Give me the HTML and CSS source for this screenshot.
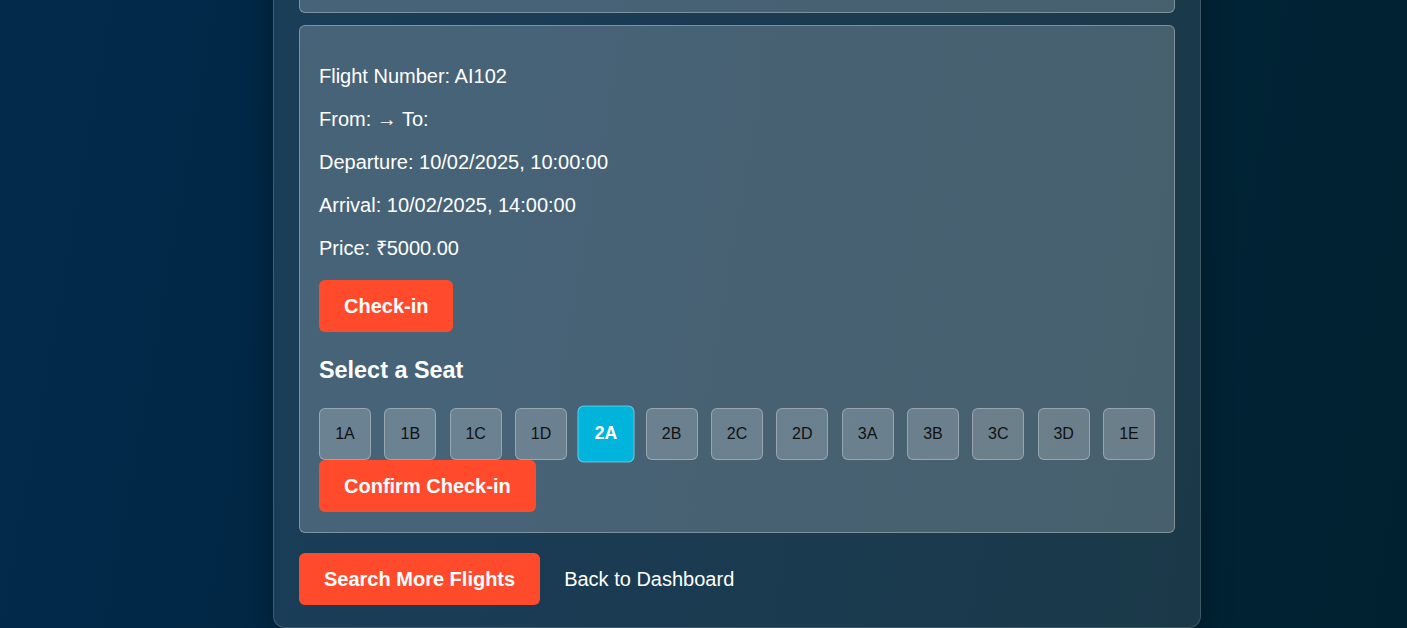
FILE: index.html
```html
<!DOCTYPE html>
<html lang="en">
<head>
<meta charset="utf-8">
<title>Flight Check-in</title>
<link rel="stylesheet" href="styles.css">
</head>
<body>
<main class="panel">
  <section class="card card-prev"></section>
  <section class="card">
    <div class="info">
      <p>Flight Number: AI102</p>
      <p>From: → To:</p>
      <p>Departure: 10/02/2025, 10:00:00</p>
      <p>Arrival: 10/02/2025, 14:00:00</p>
      <p>Price: ₹5000.00</p>
    </div>
    <button class="btn btn-checkin">Check-in</button>
    <h3 class="seat-title">Select a Seat</h3>
    <div class="seats">
      <button class="seat">1A</button>
      <button class="seat">1B</button>
      <button class="seat">1C</button>
      <button class="seat">1D</button>
      <button class="seat selected">2A</button>
      <button class="seat">2B</button>
      <button class="seat">2C</button>
      <button class="seat">2D</button>
      <button class="seat">3A</button>
      <button class="seat">3B</button>
      <button class="seat">3C</button>
      <button class="seat">3D</button>
      <button class="seat">1E</button>
    </div>
    <button class="btn btn-confirm">Confirm Check-in</button>
  </section>
  <div class="actions">
    <button class="btn">Search More Flights</button>
    <a class="link" href="#">Back to Dashboard</a>
  </div>
</main>
</body>
</html>
```

FILE: styles.css
```css
* { box-sizing: border-box; }

html, body {
  margin: 0;
  height: 628px;
  overflow: hidden;
}

body {
  font-family: "Liberation Sans", Arial, sans-serif;
  font-size: 20px;
  color: #ffffff;
  background: linear-gradient(100deg, #022a4b 0%, #012540 45%, #002230 100%);
  display: flex;
  flex-direction: column;
  justify-content: flex-end;
  padding: 0 206px 0 273px;
}

.panel {
  display: flex;
  flex-direction: column;
  gap: 12px;
  padding: 0 25px 22px 25px;
  background: rgba(255, 255, 255, 0.1);
  border: 1px solid rgba(255, 255, 255, 0.16);
  border-top: none;
  border-radius: 0 0 12px 12px;
  box-shadow: 0 8px 32px rgba(0, 0, 0, 0.3);
}

.card {
  background: rgba(255, 255, 255, 0.2);
  border: 1px solid rgba(255, 255, 255, 0.3);
  border-radius: 6px;
  padding: 20px 19px 20px 19px;
  display: flex;
  flex-direction: column;
  align-items: flex-start;
}

.card-prev {
  height: 120px;
  flex-shrink: 0;
}

.info {
  display: flex;
  flex-direction: column;
  gap: 20px;
  margin-top: 19px;
}

.info p {
  margin: 0;
  font-size: 20px;
  line-height: 23px;
}

.btn {
  font-family: "Liberation Sans", Arial, sans-serif;
  font-size: 20px;
  font-weight: bold;
  line-height: 22px;
  color: #ffffff;
  background: #ff4b2b;
  border: none;
  border-radius: 6px;
  padding: 15px 25px;
  cursor: pointer;
}

.btn-checkin {
  margin-top: 20px;
}

.seat-title {
  margin: 25px 0 0 0;
  font-size: 23.4px;
  line-height: 27px;
  font-weight: bold;
}

.seats {
  align-self: stretch;
  display: flex;
  justify-content: space-between;
  margin-top: 24px;
}

.seat {
  width: 52px;
  height: 52px;
  padding: 0;
  font-family: "Liberation Sans", Arial, sans-serif;
  font-size: 16px;
  color: #111111;
  background: rgba(255, 255, 255, 0.2);
  border: 1px solid rgba(255, 255, 255, 0.3);
  border-radius: 6px;
}

.seat.selected {
  background: #00b4dc;
  color: #ffffff;
  font-weight: bold;
  border-color: rgba(255, 255, 255, 0.35);
  transform: scale(1.1);
}

.actions {
  display: flex;
  align-items: center;
  gap: 24px;
  margin-top: 8px;
}

.link {
  color: #ffffff;
  text-decoration: none;
  font-size: 20px;
}
```
